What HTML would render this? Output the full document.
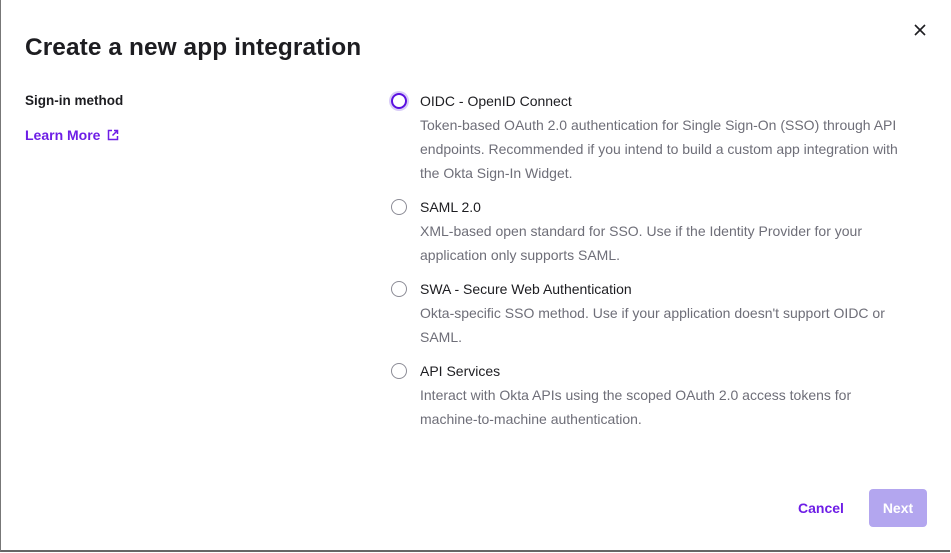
<!DOCTYPE html>
<html><head><style>
html,body{margin:0;width:951px;height:553px;overflow:hidden;background:#fff;font-family:"Liberation Sans",sans-serif;}
.frame{position:absolute;left:0;top:0;width:950px;height:552px;border-left:1px solid #777;border-bottom:2px solid #666;box-sizing:border-box;}
h1{position:absolute;left:25px;top:34px;margin:0;font-size:24.4px;font-weight:bold;color:#1d1d21;letter-spacing:0.1px;}
.close{position:absolute;left:914px;top:24px;}
.label{position:absolute;left:25px;top:93px;font-size:13.5px;font-weight:bold;color:#1d1d21;}
.learn{position:absolute;left:25px;top:127px;font-size:14px;font-weight:bold;color:#6e1ee6;}
.opt{position:absolute;left:391px;}
.radio{position:absolute;left:0;top:0;width:14px;height:14px;border:1.5px solid #8c8c96;border-radius:50%;}
.radio.sel{border:2.5px solid #5a10e0;width:12px;height:12px;box-shadow:0 0 0 2px #d8ccf7;}
.t{position:absolute;left:29px;top:0;font-size:14px;color:#1d1d21;white-space:nowrap;}
.d{position:absolute;left:29px;top:20px;width:485px;font-size:14px;line-height:24px;color:#6e6e78;}
.cancel{position:absolute;left:798px;top:500px;font-size:14px;font-weight:bold;color:#6e1ee6;}
.next{position:absolute;left:869px;top:489px;width:58px;height:38px;background:#b3a6ef;border-radius:4px;color:#fff;font-weight:bold;font-size:14px;text-align:center;line-height:38px;}
</style></head><body>
<div class="frame"></div>
<h1>Create a new app integration</h1>
<svg class="close" width="12" height="12" viewBox="0 0 12 12"><path d="M1 1L11 11M11 1L1 11" stroke="#1d1d21" stroke-width="1.6"/></svg>
<div class="label">Sign-in method</div>
<div class="learn">Learn More <svg width="12" height="12" viewBox="0 0 12 12" style="vertical-align:-1px;margin-left:3px"><path d="M5 1.5H1.5v9h9V7M7 1.5h3.5V5M10.5 1.5L5.5 6.5" fill="none" stroke="#6e1ee6" stroke-width="1.5"/></svg></div>

<div class="opt" style="top:93px"><div class="radio sel"></div><div class="t">OIDC - OpenID Connect</div><div class="d">Token-based OAuth 2.0 authentication for Single Sign-On (SSO) through API endpoints. Recommended if you intend to build a custom app integration with the Okta Sign-In Widget.</div></div>
<div class="opt" style="top:199px"><div class="radio"></div><div class="t">SAML 2.0</div><div class="d">XML-based open standard for SSO. Use if the Identity Provider for your application only supports SAML.</div></div>
<div class="opt" style="top:281px"><div class="radio"></div><div class="t">SWA - Secure Web Authentication</div><div class="d">Okta-specific SSO method. Use if your application doesn't support OIDC or SAML.</div></div>
<div class="opt" style="top:363px"><div class="radio"></div><div class="t">API Services</div><div class="d">Interact with Okta APIs using the scoped OAuth 2.0 access tokens for<br>machine-to-machine authentication.</div></div>

<div class="cancel">Cancel</div>
<div class="next">Next</div>
</body></html>
